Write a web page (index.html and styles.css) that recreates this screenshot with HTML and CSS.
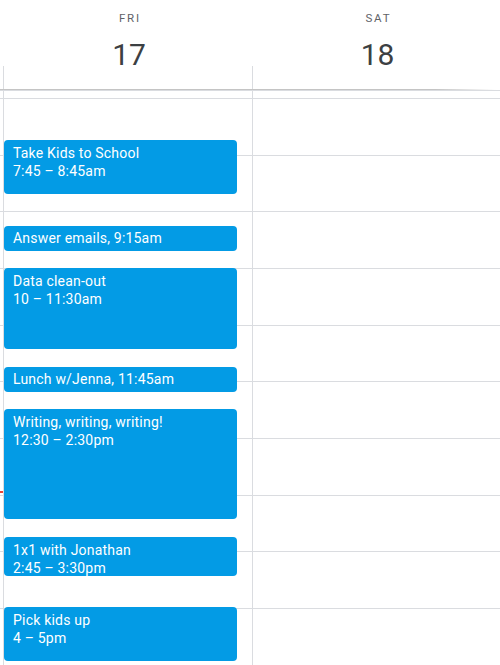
FILE: index.html
```html
<!DOCTYPE html>
<html lang="en">
<head>
<meta charset="utf-8">
<title>Calendar</title>
<link rel="stylesheet" href="styles.css">
</head>
<body>
<div class="cal">
  <div class="head">
    <div class="day">
      <div class="dow">FRI</div>
      <div class="date">17</div>
    </div>
    <div class="day">
      <div class="dow">SAT</div>
      <div class="date">18</div>
    </div>
  </div>
  <div class="grid">
    <div class="now"></div>
    <div class="col">
      <div class="event" style="top:50px;height:54px"><div class="title">Take Kids to School</div><div class="time">7:45 – 8:45am</div></div>
      <div class="event short" style="top:136px;height:25px"><div class="title">Answer emails, 9:15am</div></div>
      <div class="event" style="top:178px;height:81px"><div class="title">Data clean-out</div><div class="time">10 – 11:30am</div></div>
      <div class="event short" style="top:277px;height:25px"><div class="title">Lunch w/Jenna, 11:45am</div></div>
      <div class="event" style="top:319px;height:110px"><div class="title">Writing, writing, writing!</div><div class="time">12:30 – 2:30pm</div></div>
      <div class="event" style="top:447px;height:39px"><div class="title">1x1 with Jonathan</div><div class="time">2:45 – 3:30pm</div></div>
      <div class="event" style="top:517px;height:54px"><div class="title">Pick kids up</div><div class="time">4 – 5pm</div></div>
    </div>
    <div class="col"></div>
  </div>
</div>
</body>
</html>
```

FILE: styles.css
```css
* { box-sizing: border-box; }
html, body { margin: 0; padding: 0; background: #fff; }
body { font-family: Roboto, "Noto Sans", sans-serif; width: 500px; height: 665px; overflow: hidden; }

.cal { width: 500px; height: 665px; display: flex; flex-direction: column; }

.head {
  height: 90px;
  flex: none;
  display: grid;
  grid-template-columns: 249px 1fr;
  padding-left: 3px;
  border-bottom: 1px solid #c4c4c4;
  border-image: linear-gradient(to right, #c4c4c4 0, #c4c4c4 87%, rgba(196,196,196,0) 99%) 1;
}
.day {
  padding-top: 10px;
  padding-left: 3px;
  text-align: center;
  background: linear-gradient(#dadce0, #dadce0) left bottom / 1px 23px no-repeat;
}
.dow {
  font-size: 11.5px;
  line-height: 16px;
  letter-spacing: 1.8px;
  color: #5f6368;
  font-weight: 400;
  padding-left: 1.8px;
}
.date {
  margin-top: 9px;
  font-size: 30px;
  line-height: 40px;
  color: #3c4043;
}

.grid {
  position: relative;
  flex: 1;
  display: grid;
  grid-template-columns: 249px 1fr;
  padding-left: 3px;
  background-image: repeating-linear-gradient(to bottom, #dadce0 0, #dadce0 1px, transparent 1px, transparent 56.67px);
  background-position: 0 8px;
}
.col {
  position: relative;
  border-left: 1px solid #dadce0;
}
.now {
  position: absolute;
  left: 0;
  top: 401px;
  width: 3px;
  height: 2px;
  background: #ea4335;
}
.event {
  position: absolute;
  left: 0;
  width: 233px;
  background: #039be5;
  border-radius: 4px;
  color: #fff;
  font-size: 14px;
  line-height: 18px;
  letter-spacing: 0.2px;
  padding: 4px 9px;
  overflow: hidden;
}
.event.short { padding-top: 3px; }
```
